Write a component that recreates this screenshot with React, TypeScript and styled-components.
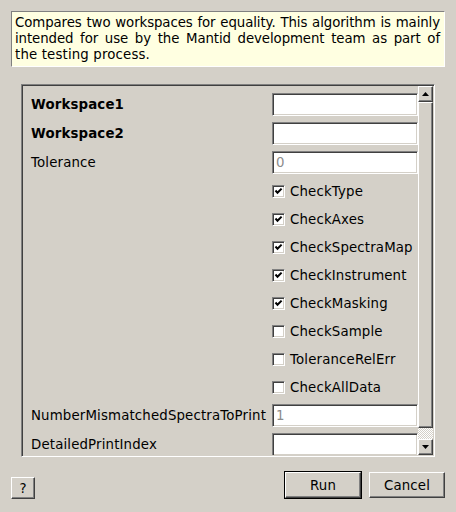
import React from "react";
import styled, { createGlobalStyle, css } from "styled-components";

const GlobalStyle = createGlobalStyle`
  html, body {
    margin: 0;
    padding: 0;
    background: #d4d0c8;
  }
  body {
    font-family: "DejaVu Sans", "Liberation Sans", sans-serif;
    font-size: 10pt;
    letter-spacing: 0.15px;
    color: #000;
  }
  * { box-sizing: border-box; }
`;

const sunken = css`
  border: 1px solid;
  border-color: #808080 #ffffff #ffffff #808080;
  box-shadow: inset 1px 1px 0 #404040, inset -1px -1px 0 #d4d0c8;
`;

const raised = css`
  border: 1px solid;
  border-color: #ffffff #404040 #404040 #ffffff;
  box-shadow: inset -1px -1px 0 #808080, inset 1px 1px 0 #d4d0c8;
  background: #d4d0c8;
`;

const Window = styled.div`
  width: 456px;
  height: 512px;
  padding: 11px 11px 13px 11px;
  display: flex;
  flex-direction: column;
`;

const Description = styled.div`
  border: 1px solid;
  border-color: #808080 #ffffff #ffffff #808080;
  background: #ffffe1;
  padding: 3px 4px 3px 3px;
  line-height: 16px;
  overflow: hidden;
`;

const DescLine = styled.div<{ $justify?: boolean }>`
  text-align: ${(p) => (p.$justify ? "justify" : "left")};
  text-align-last: ${(p) => (p.$justify ? "justify" : "left")};
  letter-spacing: ${(p) => (p.$justify ? "-0.1px" : "0.15px")};
  white-space: ${(p) => (p.$justify ? "normal" : "nowrap")};
`;

const ScrollFrame = styled.div`
  ${sunken};
  margin: 17px 10px 0 10px;
  height: 373px;
  padding: 1px;
  display: flex;
`;

const Content = styled.div`
  flex: 1;
  overflow: hidden;
  padding: 7px 0 0 8px;
  display: grid;
  grid-template-columns: 1fr 146px;
  column-gap: 6px;
  row-gap: 6px;
  align-content: start;
`;

const Label = styled.div<{ $bold?: boolean }>`
  height: 23px;
  display: flex;
  align-items: center;
  font-weight: ${(p) => (p.$bold ? "bold" : "normal")};
  white-space: nowrap;
`;

const TextInput = styled.div`
  ${sunken};
  background: #ffffff;
  height: 23px;
  padding: 0 3px;
  display: flex;
  align-items: center;
  color: #8c8c8c;
`;

const CheckRow = styled.div`
  grid-column: 2;
  height: 22px;
  display: flex;
  align-items: center;
  gap: 5px;
  white-space: nowrap;
`;

const CheckBoxBox = styled.span`
  ${sunken};
  width: 13px;
  height: 13px;
  background: #ffffff;
  display: inline-flex;
  flex: none;
`;

const ScrollBar = styled.div`
  width: 15px;
  display: flex;
  flex-direction: column;
`;

const ArrowButton = styled.div`
  ${raised};
  height: 16px;
  display: flex;
  align-items: center;
  justify-content: center;
  flex: none;
`;

const Thumb = styled.div`
  ${raised};
  height: 326px;
  flex: none;
`;

const Trough = styled.div`
  flex: 1;
  background: repeating-conic-gradient(#ffffff 0 25%, #d4d0c8 0 50%) 0 0 / 2px 2px;
`;

const ButtonBar = styled.div`
  margin-top: auto;
  display: flex;
  align-items: flex-end;
`;

const ButtonGroup = styled.div`
  margin-left: auto;
  margin-bottom: 1px;
  display: flex;
  gap: 8px;
`;

const PushButton = styled.button<{ $default?: boolean; $w: number; $h: number }>`
  ${raised};
  width: ${(p) => p.$w}px;
  height: ${(p) => p.$h}px;
  padding: 0;
  margin: 0;
  font-family: "DejaVu Sans", "Liberation Sans", sans-serif;
  font-size: 10pt;
  letter-spacing: 0.15px;
  color: #000;
  outline: ${(p) => (p.$default ? "1px solid #000" : "none")};
  display: flex;
  align-items: center;
  justify-content: center;
`;

const CheckBox: React.FC<{ checked: boolean; label: string }> = ({ checked, label }) => (
  <CheckRow>
    <CheckBoxBox>
      {checked && (
        <svg width="11" height="11" viewBox="0 0 11 11">
          <path d="M2.5 4.5 L4.5 6.8 L8.6 2.6" fill="none" stroke="#000" strokeWidth="2" />
        </svg>
      )}
    </CheckBoxBox>
    <span>{label}</span>
  </CheckRow>
);

const Arrow: React.FC<{ up?: boolean }> = ({ up }) => (
  <svg width="7" height="4" viewBox="0 0 7 4">
    {up ? <polygon points="3.5,0 7,4 0,4" fill="#000" /> : <polygon points="0,0 7,0 3.5,4" fill="#000" />}
  </svg>
);

const checks: [string, boolean][] = [
  ["CheckType", true],
  ["CheckAxes", true],
  ["CheckSpectraMap", true],
  ["CheckInstrument", true],
  ["CheckMasking", true],
  ["CheckSample", false],
  ["ToleranceRelErr", false],
  ["CheckAllData", false],
];

export default function App() {
  return (
    <>
      <GlobalStyle />
      <Window>
        <Description>
          <DescLine $justify>Compares two workspaces for equality. This algorithm is mainly</DescLine>
          <DescLine $justify>intended for use by the Mantid development team as part of</DescLine>
          <DescLine>the testing process.</DescLine>
        </Description>
        <ScrollFrame>
          <Content>
            <Label $bold>Workspace1</Label>
            <TextInput />
            <Label $bold>Workspace2</Label>
            <TextInput />
            <Label>Tolerance</Label>
            <TextInput>0</TextInput>
            {checks.map(([label, checked]) => (
              <CheckBox key={label} label={label} checked={checked} />
            ))}
            <Label>NumberMismatchedSpectraToPrint</Label>
            <TextInput>1</TextInput>
            <Label>DetailedPrintIndex</Label>
            <TextInput />
          </Content>
          <ScrollBar>
            <ArrowButton>
              <Arrow up />
            </ArrowButton>
            <Thumb />
            <Trough />
            <ArrowButton>
              <Arrow />
            </ArrowButton>
          </ScrollBar>
        </ScrollFrame>
        <ButtonBar>
          <PushButton $w={24} $h={22}>?</PushButton>
          <ButtonGroup>
            <PushButton $default $w={76} $h={26}>Run</PushButton>
            <PushButton $w={76} $h={26}>Cancel</PushButton>
          </ButtonGroup>
        </ButtonBar>
      </Window>
    </>
  );
}
